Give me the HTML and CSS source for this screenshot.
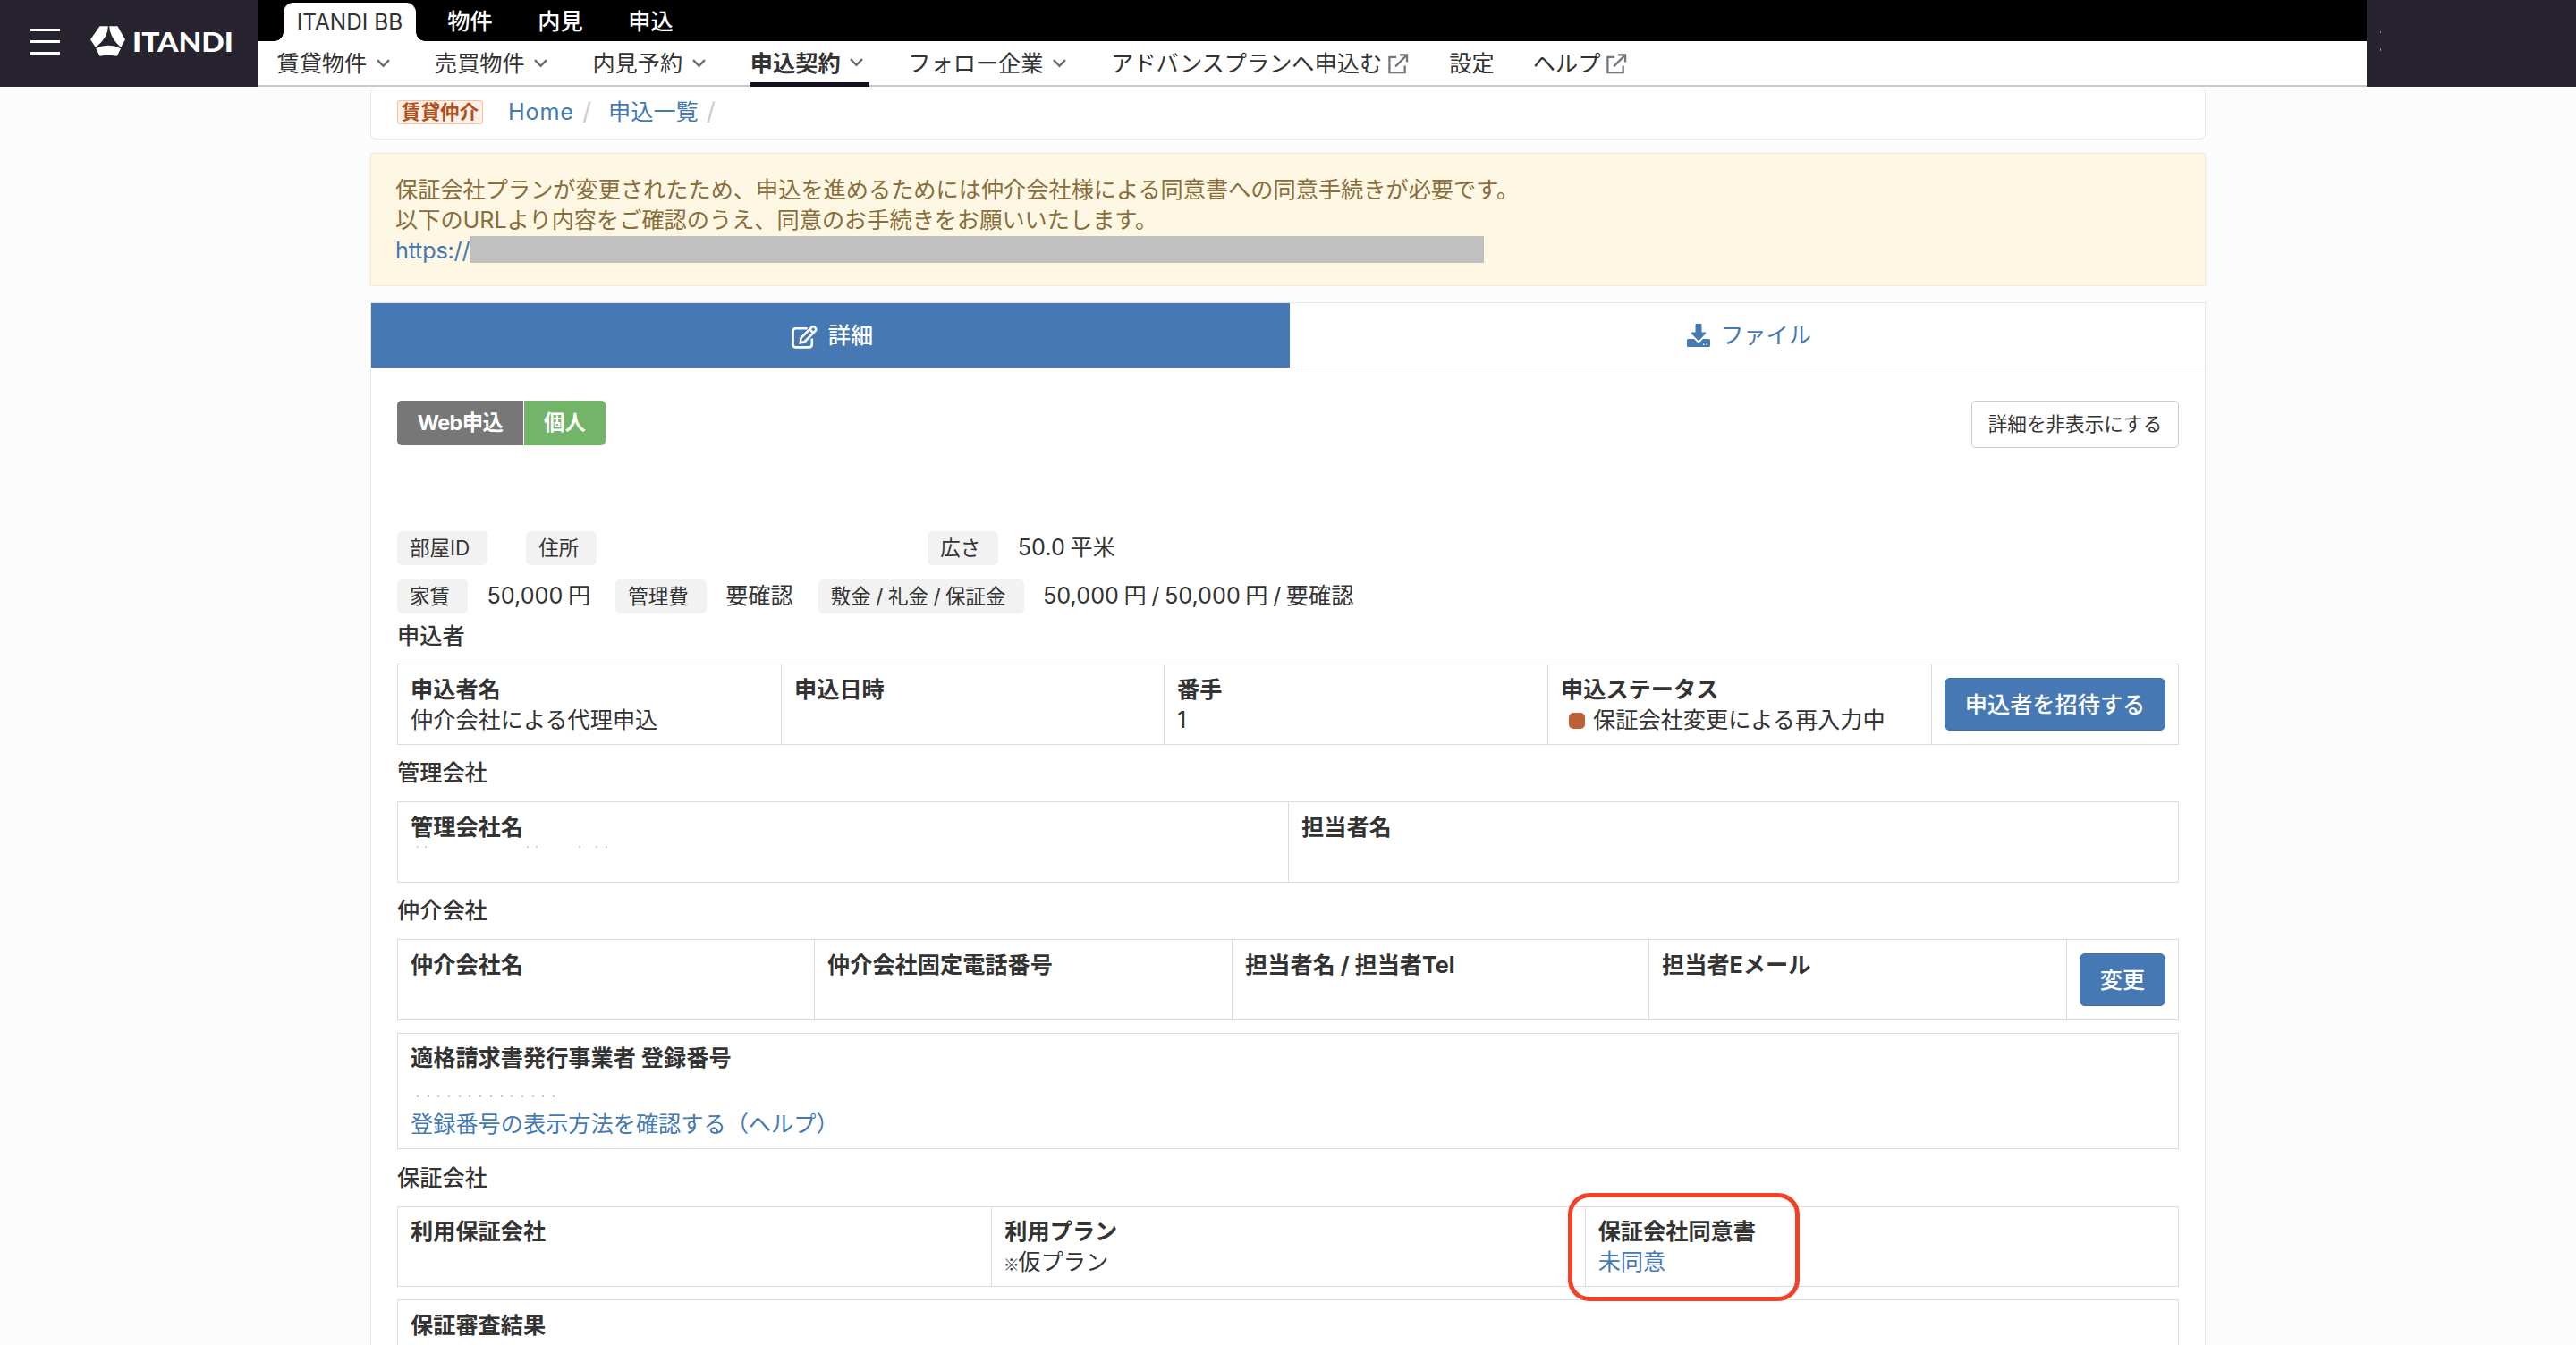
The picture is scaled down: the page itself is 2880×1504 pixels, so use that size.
FILE: index.html
```html
<!DOCTYPE html>
<html lang="ja">
<head>
    <meta charset="UTF-8">
    <meta name="viewport" content="width=device-width, initial-scale=1.0">
    <title>ITANDI BB</title>
    <link rel="stylesheet" href="styles.css">
</head>
<body>
    <header class="header">
        <div class="brand">
            <div class="hamburger"><span></span><span></span><span></span></div>
            <svg class="brand-mark" viewBox="243 87 118 102">
                <path d="M275 87H303Q304 125 261 159L243 133Z"/>
                <path d="M307 87H335L361 133L346 159Q308 125 307 87Z"/>
                <path d="M262 163Q303 142 346 163L333 189Q303 182 275 189Z"/>
            </svg>
            <svg class="brand-name" viewBox="0 0 120 44">
                <text x="0" y="33" textLength="113" lengthAdjust="spacingAndGlyphs">ITANDI</text>
            </svg>
        </div>
        <div class="header-main">
            <nav class="top-nav">
                <a class="top-tab">ITANDI BB</a>
                <a class="top-link">物件</a>
                <a class="top-link">内見</a>
                <a class="top-link">申込</a>
            </nav>
            <nav class="sub-nav">
                <a class="sub-link">賃貸物件<svg class="chevron" viewBox="0 0 15 10"><path d="M1 1.2L7.5 7.8L14 1.2"/></svg></a>
                <a class="sub-link">売買物件<svg class="chevron" viewBox="0 0 15 10"><path d="M1 1.2L7.5 7.8L14 1.2"/></svg></a>
                <a class="sub-link">内見予約<svg class="chevron" viewBox="0 0 15 10"><path d="M1 1.2L7.5 7.8L14 1.2"/></svg></a>
                <a class="sub-link active">申込契約<svg class="chevron" viewBox="0 0 15 10"><path d="M1 1.2L7.5 7.8L14 1.2"/></svg></a>
                <a class="sub-link">フォロー企業<svg class="chevron" viewBox="0 0 15 10"><path d="M1 1.2L7.5 7.8L14 1.2"/></svg></a>
                <a class="sub-link">アドバンスプランへ申込む<svg class="external" viewBox="0 0 24 24"><path d="M10 4H2V22H20V14M14 1.5H22.5V10M22 2L9 15"/></svg></a>
                <a class="sub-link">設定</a>
                <a class="sub-link">ヘルプ<svg class="external" viewBox="0 0 24 24"><path d="M10 4H2V22H20V14M14 1.5H22.5V10M22 2L9 15"/></svg></a>
            </nav>
        </div>
        <div class="header-side">
            <svg class="specks" viewBox="0 0 1 22"><path d="M0 0h1v2h-1zM0 19h1v3h-1z"/></svg>
        </div>
    </header>

    <main class="container">
        <div class="breadcrumb">
            <span class="role">賃貸仲介</span>
            <a class="link home">Home</a><span class="sep">/</span>
            <a class="link">申込一覧</a><span class="sep">/</span>
        </div>

        <div class="alert">
            <div>保証会社プランが変更されたため、申込を進めるためには仲介会社様による同意書への同意手続きが必要です。</div>
            <div>以下のURLより内容をご確認のうえ、同意のお手続きをお願いいたします。</div>
            <div class="alert-url"><a class="link">https://</a><span class="mask"></span></div>
        </div>

        <div class="panel">
            <div class="tabs">
                <a class="tab active">
                    <svg class="icon-edit" viewBox="0 0 28 26"><path d="M17 4H4.500Q1.500 4 1.500 7V21.500Q1.500 24.500 4.500 24.500H19Q22 24.500 22 21.500V15"/><path d="M9.500 19.500L10 14.500L21.500 3Q23 1.200 25 2.800Q27.500 4.800 25.500 6.800L14 18.500ZM19.500 5L23.500 9"/></svg>
                    詳細
                </a>
                <a class="tab">
                    <svg class="icon-download" viewBox="0 0 26 26"><path fill-rule="evenodd" d="M9.500 1Q9.500 0 10.500 0H15.500Q16.500 0 16.500 1V9.500H20.500Q22 9.500 21 11L13.800 18.500Q13 19.200 12.200 18.500L5 11Q4 9.500 5.500 9.500H9.500ZM1.500 17H8L11.500 20.500Q13 21.500 14.500 20.500L18 17H24.500Q26 17 26 18.500V24.500Q26 26 24.500 26H1.500Q0 26 0 24.500V18.500Q0 17 1.500 17ZM18 22.500V24H19.600V22.500ZM21.500 22.500V24H23.100V22.500Z"/></svg>
                    ファイル
                </a>
            </div>

            <div class="panel-body">
                <div class="toolbar">
                    <div class="labels"><span class="label gray">Web申込</span><span class="label green">個人</span></div>
                    <button class="btn-default">詳細を非表示にする</button>
                </div>

                <div class="info-row">
                    <span class="tag">部屋ID</span><span class="value empty-id"></span>
                    <span class="tag">住所</span><span class="value empty-address"></span>
                    <span class="tag">広さ</span><span class="value">50.0 平米</span>
                </div>
                <div class="info-row">
                    <span class="tag">家賃</span><span class="value">50,000 円</span>
                    <span class="tag">管理費</span><span class="value">要確認</span>
                    <span class="tag">敷金 / 礼金 / 保証金</span><span class="value">50,000 円 / 50,000 円 / 要確認</span>
                </div>

                <h2 class="section-title first">申込者</h2>
                <div class="grid applicant">
                    <div class="cell"><b>申込者名</b><div>仲介会社による代理申込</div></div>
                    <div class="cell"><b>申込日時</b></div>
                    <div class="cell"><b>番手</b><div>1</div></div>
                    <div class="cell"><b>申込ステータス</b><div class="status"><i class="dot"></i>保証会社変更による再入力中</div></div>
                    <div class="cell action"><button class="btn-primary">申込者を招待する</button></div>
                </div>

                <h2 class="section-title">管理会社</h2>
                <div class="grid manager">
                    <div class="cell">
                        <b>管理会社名</b>
                        <svg class="traces" viewBox="0 0 230 2"><path d="M7 0h2v2h-2zM16 0h2v2h-2zM130 0h2v2h-2zM140 0h2v2h-2zM188 0h2v2h-2zM207 0h2v2h-2zM218 0h2v2h-2z"/></svg>
                    </div>
                    <div class="cell"><b>担当者名</b></div>
                </div>

                <h2 class="section-title">仲介会社</h2>
                <div class="grid broker">
                    <div class="cell"><b>仲介会社名</b></div>
                    <div class="cell"><b>仲介会社固定電話番号</b></div>
                    <div class="cell"><b>担当者名 / 担当者Tel</b></div>
                    <div class="cell"><b>担当者Eメール</b></div>
                    <div class="cell action"><button class="btn-primary">変更</button></div>
                </div>
                <div class="grid invoice">
                    <div class="cell">
                        <b>適格請求書発行事業者 登録番号</b>
                        <div class="dots"></div>
                        <a class="link">登録番号の表示方法を確認する（ヘルプ）</a>
                    </div>
                </div>

                <h2 class="section-title last">保証会社</h2>
                <div class="grid guarantor">
                    <div class="cell"><b>利用保証会社</b></div>
                    <div class="cell"><b>利用プラン</b><div class="plan"><span class="note">※</span>仮プラン</div></div>
                    <div class="cell consent"><b>保証会社同意書</b><div><a class="link">未同意</a></div><span class="highlight"></span></div>
                </div>
                <div class="grid result">
                    <div class="cell"><b>保証審査結果</b></div>
                </div>
            </div>
        </div>
    </main>
</body>
</html>
```

FILE: styles.css
```css
* {
    box-sizing: border-box;
}

body {
    margin: 0;
    height: 1504px;
    overflow: hidden;
    background-color: #fcfcfc;
    color: #333;
    font-family: Inter, "Noto Sans CJK JP", sans-serif;
    font-size: 25.2px;
    line-height: 34.4px;
}

button {
    font-family: inherit;
    margin: 0;
    padding: 0;
}

.link {
    color: #4479b3;
}

/* header */
.header {
    display: flex;
    height: 97px;
    background-color: #27242f;
}

.brand {
    display: flex;
    width: 288px;
    padding-left: 34px;
}

.hamburger {
    display: flex;
    flex-direction: column;
    gap: 10px;
    width: 33px;
    margin: 32px 34px 0 0;
}

.hamburger span {
    height: 3px;
    background-color: #fff;
}

.brand-mark {
    width: 39px;
    height: 34px;
    margin: 29px 8px 0 0;
    fill: #fff;
}

.brand-name {
    width: 120px;
    height: 44px;
    margin-top: 25px;
    fill: #fff;
    font-family: Lato, sans-serif;
    font-size: 31px;
    font-weight: 900;
}

.header-main {
    width: 2358px;
    background-color: #fff;
    border-bottom: 2px solid #c8c8cf;
}

.top-nav {
    display: flex;
    height: 46px;
    padding: 3px 0 0 29px;
    background-color: #000;
    color: #fff;
}

.top-tab {
    position: relative;
    width: 148px;
    height: 43px;
    margin-right: 10px;
    border-radius: 11px 11px 0 0;
    background-color: #fff;
    color: #333;
    font-size: 24.4px;
    line-height: 42px;
    text-align: center;
    white-space: nowrap;
}

/* flared feet of the selected tab */
.top-tab::before,
.top-tab::after {
    content: "";
    position: absolute;
    bottom: 0;
    width: 10px;
    height: 10px;
}

.top-tab::before {
    left: -10px;
    background: radial-gradient(circle at 0 0, #000 9.5px, #fff 10px);
}

.top-tab::after {
    right: -10px;
    background: radial-gradient(circle at 100% 0, #000 9.5px, #fff 10px);
}

.top-link {
    width: 101px;
    line-height: 42px;
    text-align: center;
    font-weight: 500;
}

.sub-nav {
    display: flex;
    gap: 43.2px;
    height: 51px;
    padding-left: 21.5px;
}

.sub-link {
    display: flex;
    align-items: center;
    height: 51px;
    padding-bottom: 1px;
    line-height: 50px;
    white-space: nowrap;
}

.sub-link.active {
    font-weight: bold;
    border-bottom: 5px solid #16101f;
    padding: 4px 0 0;
}

.sub-link.active .chevron {
    margin-top: -2px;
}

.chevron {
    width: 15px;
    height: 10px;
    margin: 0 7px 0 10.5px;
    fill: none;
    stroke: #6b6b76;
    stroke-width: 2.4;
}

.external {
    width: 24px;
    height: 23px;
    margin: 0 2px 0 6px;
    fill: none;
    stroke: #74747e;
    stroke-width: 2.4;
}

.header-side {
    padding: 35px 0 0 15px;
}

.specks {
    display: block;
    width: 1px;
    height: 22px;
    fill: #8a8890;
}

/* page */
.container {
    width: 2052px;
    margin: 0 auto;
}

.breadcrumb {
    display: flex;
    align-items: center;
    height: 59px;
    padding: 0 0 2px 29px;
    border: 1px solid #e7e7ea;
    border-top: 0;
    border-radius: 7px;
    background-color: #fff;
}

.role {
    width: 96px;
    height: 27px;
    margin-right: 28px;
    border: 1px solid #f5c3a2;
    border-radius: 3px;
    background-color: #fff0e6;
    color: #b04e1c;
    font-size: 21.6px;
    font-weight: bold;
    line-height: 24px;
    text-align: center;
}

.home {
    width: 74px;
    letter-spacing: 0.8px;
}

.sep {
    width: 12px;
    margin: 0 18px 0 8px;
    color: #ccc;
    font-size: 27px;
    text-align: center;
}

.alert {
    height: 149px;
    margin-top: 15px;
    padding: 23px 27px;
    border: 1px solid #f7ebcd;
    background-color: #fdf7e4;
    color: #8a6d3b;
}

.alert-url {
    display: flex;
    line-height: 33px;
}

.alert-url .link {
    width: 83px;
    letter-spacing: -0.2px;
}

.mask {
    width: 1134px;
    height: 30px;
    background-color: #c0c0c0;
}

.panel {
    height: 1200px;
    margin-top: 18px;
    border: 1px solid #e7e7ea;
    background-color: #fff;
}

.tabs {
    display: flex;
    height: 73px;
    border-bottom: 1px solid #e7e7ea;
}

.tab {
    display: flex;
    flex: 1;
    align-items: center;
    justify-content: center;
    gap: 12px;
    padding-left: 4px;
    color: #4479b3;
}

.tab.active {
    flex: none;
    width: 1027px;
    background-color: #4679b3;
    color: #fff;
    font-weight: 500;
}

.icon-edit {
    width: 29px;
    height: 27px;
    margin-top: 2px;
    fill: none;
    stroke: #fff;
    stroke-width: 2.5;
}

.icon-download {
    width: 26px;
    height: 26px;
    fill: #4479b3;
}

.panel-body {
    padding: 36px 29px 0;
}

.toolbar {
    display: flex;
    justify-content: space-between;
    height: 146px;
}

.labels {
    display: flex;
    gap: 1px;
    height: 50px;
    color: #fff;
    font-size: 23.4px;
    font-weight: bold;
    line-height: 49px;
    text-align: center;
}

.label.gray {
    width: 141px;
    border-radius: 5px 0 0 5px;
    background-color: #777;
    letter-spacing: -0.6px;
}

.label.green {
    width: 91px;
    border-radius: 0 5px 5px 0;
    background-color: #73b568;
}

.btn-default {
    width: 232px;
    height: 53px;
    padding-bottom: 4px;
    border: 1px solid #ccc;
    border-radius: 5px;
    background-color: #fff;
    color: #333;
    font-size: 21.6px;
}

.info-row {
    display: flex;
    height: 38px;
    margin-bottom: 16px;
}

.tag {
    padding: 0 20px 0 14px;
    border-radius: 5px;
    background-color: #f2f2f2;
    font-size: 22.5px;
    line-height: 38px;
    word-spacing: -0.8px;
}

.value {
    margin: 0 28px 0 21.5px;
    line-height: 36px;
    word-spacing: -1.5px;
}

.empty-id {
    margin: 0;
    width: 43px;
}

.empty-address {
    margin: 0;
    width: 370px;
}

.section-title {
    margin: 0;
    height: 63px;
    font-size: 25.2px;
    font-weight: 500;
    line-height: 63px;
}

.section-title.first {
    height: 40px;
    line-height: 18px;
}

.section-title.last {
    height: 64px;
    line-height: 64px;
}

/* bordered tables */
.grid {
    display: grid;
    height: 91px;
    border: 1px solid #dcdcdc;
}

.cell {
    padding: 11px 14px 0;
    border-left: 1px solid #dcdcdc;
}

.cell:first-child {
    border-left: 0;
}

.cell b {
    display: block;
}

.cell.action {
    padding: 15px 14px;
}

.applicant {
    grid-template-columns: 428px 428px 429px 429px 1fr;
}

.manager {
    grid-template-columns: 1fr 1fr;
}

.broker {
    grid-template-columns: 465px 467px 466px 467px 1fr;
}

.invoice {
    height: 130px;
    margin-top: 14px;
}

.invoice .cell {
    padding-top: 10px;
}

.guarantor {
    height: 90px;
    grid-template-columns: 1fr 1fr 1fr;
}

.guarantor .cell {
    padding-top: 10px;
}

.result {
    margin-top: 14px;
}

.btn-primary {
    width: 100%;
    height: 59px;
    padding-bottom: 3px;
    border: 1px solid #3f6da3;
    border-radius: 6px;
    background-color: #4679b3;
    color: #fff;
    font-size: 25.2px;
    font-weight: 500;
}

.status {
    display: flex;
    align-items: center;
}

.dot {
    width: 18px;
    height: 18px;
    margin: 0 9px 0 9px;
    border-radius: 5px;
    background-color: #bf5f36;
}

.traces {
    display: block;
    width: 230px;
    height: 2px;
    margin-top: 4px;
    fill: #d5d5d5;
}

/* dotted line left under the registration number */
.dots {
    width: 156px;
    height: 2px;
    margin: 25px 0 13px 7px;
    background: repeating-linear-gradient(90deg, #ccc 0 2px, transparent 2px 11.7px);
}

.plan {
    display: flex;
}

.note {
    width: 15px;
    font-family: "Noto Sans CJK JP", sans-serif;
    font-size: 18px;
    text-indent: -1.5px;
    padding-top: 2px;
}

.consent {
    position: relative;
}

.highlight {
    position: absolute;
    left: -20px;
    top: -16px;
    width: 259px;
    height: 121px;
    border: 5px solid #ee4328;
    border-radius: 24px;
}
```
